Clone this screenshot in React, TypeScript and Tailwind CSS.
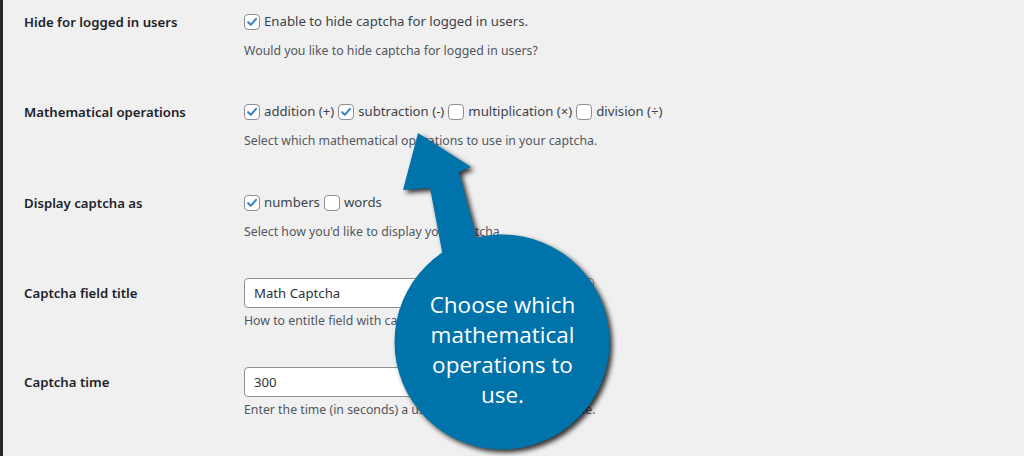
const font = { fontFamily: '"Noto Sans", "Open Sans", sans-serif' };

const Check = ({ checked }: { checked?: boolean }) => (
    <span className="inline-flex h-4 w-4 shrink-0 items-center justify-center rounded-[4px] border border-[#8c8f94] bg-white mr-1">
        {checked && (
            <svg viewBox="0 0 16 16" className="h-4 w-4">
                <path d="M3.6 8.2 L6.6 11.2 L12.6 4.4" fill="none" stroke="#3582c4" strokeWidth="2.3" strokeLinecap="round" strokeLinejoin="round" />
            </svg>
        )}
    </span>
);

const Opt = ({ label, checked }: { label: string; checked?: boolean }) => (
    <span className="inline-flex items-center mr-1">
        <Check checked={checked} />
        {label}
    </span>
);

const Row = ({ label, height, children }: { label: string; height: string; children: React.ReactNode }) => (
    <div className={`flex ${height}`}>
        <div className="w-[220px] shrink-0 pt-[10px] text-[13.2px] leading-6 font-semibold text-[#1d2327]">{label}</div>
        <div className="flex flex-col">{children}</div>
    </div>
);

const Desc = ({ children, mt }: { children: React.ReactNode; mt: string }) => (
    <p className={`${mt} text-[12.3px] leading-6 text-[#50575e]`}>{children}</p>
);

export default function App() {
    return (
        <div className="relative flex h-[456px] w-[1024px] overflow-hidden bg-[#f0f0f1]" style={font}>
            <div className="w-[3px] shrink-0 bg-[#23282d]" />
            <div className="flex flex-col pl-[21px]">
                <Row label="Hide for logged in users" height="h-[90px]">
                    <div className="mt-[10px] flex h-6 items-center text-[13.2px] text-[#3c434a]">
                        <Opt label="Enable to hide captcha for logged in users." checked />
                    </div>
                    <Desc mt="mt-[5px]">Would you like to hide captcha for logged in users?</Desc>
                </Row>
                <Row label="Mathematical operations" height="h-[91px]">
                    <div className="mt-[10px] flex h-6 items-center text-[13.2px] text-[#3c434a]">
                        <Opt label="addition (+)" checked />
                        <Opt label="subtraction (-)" checked />
                        <Opt label="multiplication (×)" />
                        <Opt label="division (÷)" />
                    </div>
                    <Desc mt="mt-[5px]">Select which mathematical operations to use in your captcha.</Desc>
                </Row>
                <Row label="Display captcha as" height="h-[90px]">
                    <div className="mt-[10px] flex h-6 items-center text-[13.2px] text-[#3c434a]">
                        <Opt label="numbers" checked />
                        <Opt label="words" />
                    </div>
                    <Desc mt="mt-[5px]">Select how you'd like to display your captcha.</Desc>
                </Row>
                <Row label="Captcha field title" height="h-[89px]">
                    <input
                        readOnly
                        value="Math Captcha"
                        className="mt-[7px] h-[30px] w-[350px] rounded-[4px] border border-[#8c8f94] bg-white px-[9px] text-[13.2px] text-[#2c3338] outline-none"
                        style={font}
                    />
                    <Desc mt="mt-[1px]">How to entitle field with captcha?</Desc>
                </Row>
                <Row label="Captcha time" height="h-[96px]">
                    <input
                        readOnly
                        value="300"
                        className="mt-[7px] h-[30px] w-[350px] rounded-[4px] border border-[#8c8f94] bg-white px-[9px] text-[13.2px] text-[#2c3338] outline-none"
                        style={font}
                    />
                    <Desc mt="mt-[1px]">Enter the time (in seconds) a user has to enter captcha value.</Desc>
                </Row>
            </div>

            <svg
                className="pointer-events-none absolute left-0 top-0"
                width="1024"
                height="456"
                style={{ filter: "drop-shadow(3px 3px 2.5px rgba(0,0,0,0.8))" }}
            >
                <g fill="#0073aa">
                    <polygon points="418,133 471,167 459,172 483,262 444,262 430,188 403,190" />
                    <circle cx="502" cy="342" r="107.5" />
                </g>
            </svg>
            <div
                className="pointer-events-none absolute left-[395px] top-[290px] w-[215px] text-center text-[22.5px] leading-[30px] text-white"
                style={{ fontFamily: '"Open Sans", sans-serif' }}
            >
                Choose which
                <br />
                mathematical
                <br />
                operations to
                <br />
                use.
            </div>
        </div>
    );
}
